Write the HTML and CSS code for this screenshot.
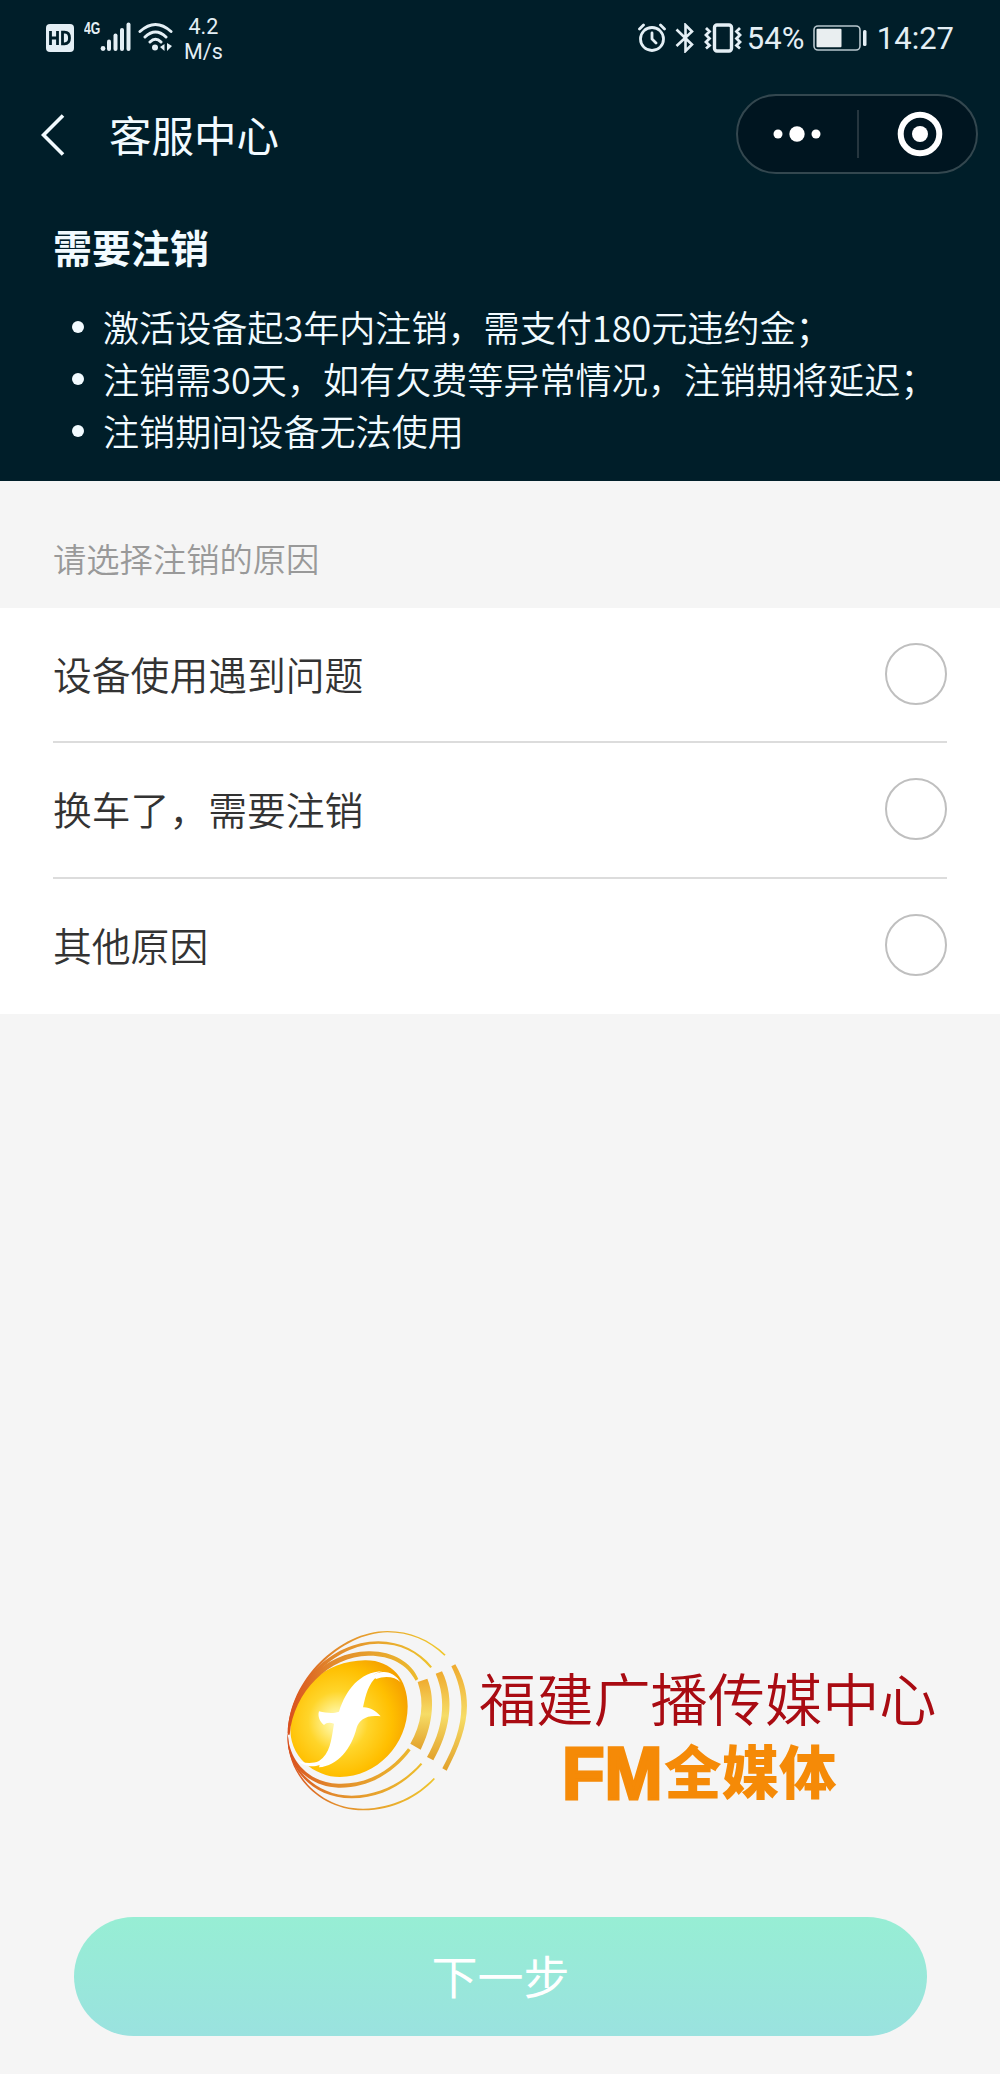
FILE: index.html
```html
<!DOCTYPE html>
<html lang="zh-CN">
<head>
    <meta charset="UTF-8">
    <meta name="viewport" content="width=device-width, initial-scale=1.0">
    <title>客服中心</title>
    <link rel="stylesheet" href="styles.css">
</head>
<body>
    <header class="header">
        <!-- Status bar -->
        <div class="status-bar">
            <div class="status-left">
                <svg class="hd-icon" width="28" height="28" viewBox="0 0 28 28">
                    <rect width="28" height="28" rx="4" fill="#e4eff5"/>
                    <path d="M4.500 7v14M11.500 7v14M4.500 14h7M16.500 8.200v11.600h2q5 0 5-5.800t-5-5.800z" fill="none" stroke="#001e29" stroke-width="2.800"/>
                </svg>
                <span class="network">4G</span>
                <svg class="signal-icon" width="32" height="30" viewBox="0 0 32 30" fill="#e4eff5">
                    <circle cx="3" cy="26.500" r="2.400"/>
                    <rect x="7" y="17.500" width="4" height="11.500" rx="2"/>
                    <rect x="13.500" y="11.500" width="4" height="17.500" rx="2"/>
                    <rect x="20" y="6" width="4" height="23" rx="2"/>
                    <rect x="26.500" y="0.500" width="4" height="28.500" rx="2"/>
                </svg>
                <svg class="wifi-icon" width="36" height="30" viewBox="0 0 36 30" fill="none" stroke="#e4eff5" stroke-width="3" stroke-linecap="round">
                    <path d="M2 9.500Q17.500-4.500 33 9.500M7 15Q17.500 5 28 15M12 20Q17.500 14.500 23 20"/>
                    <circle cx="17" cy="25.500" r="3" fill="#e4eff5" stroke="none"/>
                    <path d="M22 25l4.500-3v7zM29 21v8l5-5z" fill="#e4eff5" stroke="none"/>
                </svg>
                <div class="speed">
                    <span>4.2</span>
                    <span>M/s</span>
                </div>
            </div>
            <div class="status-right">
                <svg width="28" height="30" viewBox="0 0 28 30" fill="none" stroke="#e4eff5" stroke-width="2.800" stroke-linecap="round">
                    <circle cx="14" cy="16" r="11.500"/>
                    <path d="M14 10v6l4 4M1.500 6l4-4M26.500 6l-4-4"/>
                </svg>
                <svg class="bluetooth-icon" width="20" height="30" viewBox="0 0 20 30" fill="none" stroke="#e4eff5" stroke-width="2.600">
                    <path d="M1.500 6.500l15.500 15-6.500 6.500V2l6.500 6.500-15.500 14.500"/>
                </svg>
                <svg class="vibrate-icon" width="38" height="30" viewBox="0 0 38 30" fill="none" stroke="#e4eff5" stroke-width="3.400">
                    <rect x="10.500" y="2" width="17" height="26" rx="2.500"/>
                    <path d="M2 5l3.500 3.500-3.500 3.500 3.500 3.500-3.500 3.500 3.500 3.500-3.500 3M36 5l-3.500 3.500 3.500 3.500-3.500 3.500 3.500 3.500-3.500 3.500 3.500 3" stroke-width="2.800"/>
                </svg>
                <span class="percent">54%</span>
                <svg class="battery-icon" width="54" height="26" viewBox="0 0 54 26">
                    <rect x="1" y="1" width="46" height="24" rx="4" fill="none" stroke="#b7c6cd" stroke-width="1.600"/>
                    <rect x="3.500" y="3.800" width="25" height="18.500" rx="1" fill="#e9eef0"/>
                    <rect x="50" y="5" width="3.500" height="16" rx="1.500" fill="#e4eff5"/>
                </svg>
                <span class="clock">14:27</span>
            </div>
        </div>

        <!-- Navigation -->
        <div class="nav">
            <svg class="back-icon" width="26" height="44" viewBox="0 0 26 44" fill="none" stroke="#f2fbff" stroke-width="3.600">
                <path d="M22 2.500L2.500 22 22 41.500"/>
            </svg>
            <h1>客服中心</h1>
            <div class="capsule">
                <svg class="more-icon" width="48" height="16" viewBox="0 0 48 16" fill="#fff">
                    <circle cx="5" cy="8" r="4.500"/>
                    <circle cx="24" cy="8" r="7.700"/>
                    <circle cx="43" cy="8" r="4.500"/>
                </svg>
                <span class="capsule-line"></span>
                <svg class="close-icon" width="46" height="46" viewBox="0 0 46 46">
                    <circle cx="23" cy="23" r="19.300" fill="none" stroke="#fff" stroke-width="6"/>
                    <circle cx="23" cy="23" r="8" fill="#fff"/>
                </svg>
            </div>
        </div>

        <!-- Cancellation notice -->
        <div class="notice">
            <h2>需要注销</h2>
            <ul>
                <li>激活设备起3年内注销，需支付180元违约金；</li>
                <li>注销需30天，如有欠费等异常情况，注销期将延迟；</li>
                <li>注销期间设备无法使用</li>
            </ul>
        </div>
    </header>

    <main>
        <p class="hint">请选择注销的原因</p>
        <div class="options">
            <label class="option">
                <span>设备使用遇到问题</span>
                <input type="radio" name="reason">
            </label>
            <label class="option">
                <span>换车了，需要注销</span>
                <input type="radio" name="reason">
            </label>
            <label class="option">
                <span>其他原因</span>
                <input type="radio" name="reason">
            </label>
        </div>
    </main>

    <!-- Broadcaster logo -->
    <div class="brand">
        <svg class="brand-logo" width="185" height="185" viewBox="45 55 555 555">
            <defs>
                <radialGradient id="ball" gradientUnits="userSpaceOnUse" cx="205" cy="335" r="215">
                    <stop offset="0" stop-color="#fffbd0"/>
                    <stop offset="0.180" stop-color="#fff08a"/>
                    <stop offset="0.420" stop-color="#ffd52a"/>
                    <stop offset="0.750" stop-color="#ffbf00"/>
                    <stop offset="1" stop-color="#f6a300"/>
                </radialGradient>
                <linearGradient id="ring" gradientUnits="userSpaceOnUse" x1="55" y1="0" x2="500" y2="0">
                    <stop offset="0" stop-color="#d9501e"/>
                    <stop offset="0.300" stop-color="#e28a2c"/>
                    <stop offset="1" stop-color="#efc62d"/>
                </linearGradient>
                <linearGradient id="wave" x1="0" y1="0" x2="0" y2="1">
                    <stop offset="0" stop-color="#efaa2e"/>
                    <stop offset="0.500" stop-color="#f6dc66"/>
                    <stop offset="1" stop-color="#e2a12b"/>
                </linearGradient>
            </defs>
            <path d="M62 345C70 240 165 153 285 152C365 151 413 208 413 290C413 405 320 502 210 502C135 502 52 440 62 345Z" fill="url(#ball)"/>
            <g fill="url(#ring)">
                <path d="M54 370C56 210 210 64 352 64C420 64 480 90 527 135L523 138C475 93 420 68 352 68C215 70 62 215 57 370Z"/>
                <path d="M53 370C60 225 180 96 325 95C393 96 448 125 486 171L481 175C440 127 393 102 325 102C190 103 64 240 58 370Z"/>
                <path d="M54 375C60 240 160 127 295 125C365 123 425 158 445 208L437 213C410 162 360 137 295 138C180 139 70 245 59 375Z"/>
                <path d="M54 360C48 435 105 520 205 522C300 525 370 475 414 416L422 422C375 485 300 536 205 534C105 530 40 450 54 360Z"/>
                <path d="M54 375C52 465 130 558 245 558C335 556 403 515 452 460L457 464C405 523 335 565 245 566C120 566 45 465 54 375Z"/>
                <path d="M54 380C55 490 150 598 280 597C370 595 440 558 491 505L495 508C443 564 370 601 280 602C145 602 48 490 54 380Z"/>
            </g>
            <g fill="url(#wave)">
                <path d="M443 217L472 207C499 272 485 355 452 420L421 402C454 345 465 280 443 217Z"/>
                <path d="M497 192L516 185C558 270 537 370 490 452L471 442C518 360 532 275 497 192Z"/>
                <path d="M544 170L556 164C618 270 590 370 530 483L517 476C575 370 597 275 544 170Z"/>
            </g>
            <!-- White bird shape -->
            <path d="M338 184C268 188 228 240 207 306C190 312 170 310 147 305C142 320 150 338 162 346C170 338 180 338 192 342C184 392 180 432 147 454C125 464 95 461 78 448C94 470 127 474 149 466L147 473C203 468 244 418 260 354C268 330 290 314 332 320C316 303 300 292 279 293C288 252 296 222 320 201C345 187 370 194 388 214C370 184 335 181 309 196C317 190 327 187 338 184Z" fill="#fff"/>
            <path d="M310 198C340 178 375 193 392 218C376 201 345 197 318 208Z" fill="#fff"/>
        </svg>
        <div class="brand-text">
            <span class="brand-name">福建广播传媒中心</span>
            <span class="brand-sub"><span class="brand-fm">FM</span><span class="brand-media">全媒体</span></span>
        </div>
    </div>

    <button class="next-btn" type="button">下一步</button>
</body>
</html>
```

FILE: styles.css
```css
* {
    margin: 0;
    padding: 0;
    box-sizing: border-box;
}

body {
    background-color: #f5f5f5;
    font-family: "Noto Sans CJK SC", sans-serif;
    width: 1000px;
    height: 2074px;
    display: flex;
    flex-direction: column;
}

svg {
    display: block;
    flex-shrink: 0;
}

.header {
    height: 481px;
    background-color: #001e29;
    color: #f2fbff;
}

.status-bar {
    height: 76px;
    padding: 0 47px 0 46px;
    display: flex;
    justify-content: space-between;
    font-family: Roboto, sans-serif;
    color: #e4eff5;
}

.status-left,
.status-right {
    display: flex;
    align-items: center;
}

.network {
    font-family: "Liberation Sans", sans-serif;
    font-size: 17px;
    font-weight: bold;
    line-height: 16px;
    width: 16px;
    margin: -18px 0 0 10px;
    transform: scaleX(0.72);
    transform-origin: left;
}

.signal-icon {
    margin-top: -2px;
}

.wifi-icon {
    margin: -2px 0 0 6px;
}

.speed {
    display: flex;
    flex-direction: column;
    align-items: center;
    margin: 1px 0 0 10px;
    font-size: 21.5px;
    line-height: 25px;
}

.status-right {
    font-size: 31px;
    margin-right: -1px;
}

.bluetooth-icon {
    margin-left: 9px;
}

.vibrate-icon {
    margin-left: 9px;
}

.percent {
    margin-left: 5px;
    width: 60px;
}

.battery-icon {
    margin-left: 6px;
}

.clock {
    margin-left: 10px;
}

.nav {
    height: 118px;
    padding: 0 22px 0 41px;
    display: flex;
    align-items: center;
}

.nav h1 {
    font-size: 42.5px;
    font-weight: 400;
    line-height: 60px;
    margin: -2px 0 0 42px;
}

.capsule {
    width: 242px;
    height: 80px;
    margin-left: auto;
    margin-top: -2px;
    padding-left: 35px;
    border: 2px solid #33474f;
    border-radius: 40px;
    background-color: #001520;
    display: flex;
    align-items: center;
}

.capsule-line {
    width: 2px;
    height: 48px;
    margin-left: 36px;
    background-color: #26363f;
}

.close-icon {
    margin-left: 38px;
}

.notice {
    padding: 23px 53px 0;
}

.notice h2 {
    font-size: 39px;
    font-weight: 700;
    line-height: 58px;
}

.notice ul {
    list-style: none;
    margin-top: 25px;
}

.notice li {
    display: flex;
    align-items: center;
    font-size: 36.1px;
    font-weight: 350;
    line-height: 52px;
    white-space: nowrap;
}

.notice li::before {
    content: "";
    width: 12px;
    height: 12px;
    margin: 2px 19px 0 19px;
    border-radius: 50%;
    background-color: #f2fbff;
}

.hint {
    height: 127px;
    padding: 52px 53px 0;
    font-size: 33.3px;
    font-weight: 350;
    line-height: 50px;
    color: #999;
}

.options {
    height: 406px;
    padding: 0 53px;
    background-color: #fff;
}

.option {
    height: 136px;
    padding-bottom: 2px;
    display: flex;
    align-items: center;
    justify-content: space-between;
    border-bottom: 2px solid #dcdcdc;
    font-size: 38.8px;
    font-weight: 350;
    color: #333;
}

.option:first-child {
    height: 135px;
}

.option span {
    margin-top: -2px;
}

.option:last-child {
    border-bottom: none;
    padding-bottom: 4px;
}

.option input {
    appearance: none;
    width: 62px;
    height: 62px;
    border: 2px solid #bfbfbf;
    border-radius: 50%;
    background-color: #fff;
}

.brand {
    margin: 614px 0 0 285px;
    height: 185px;
    display: flex;
}

.brand-text {
    margin-left: 9px;
    display: flex;
    flex-direction: column;
}

.brand-name {
    margin-top: 26px;
    font-size: 57.2px;
    font-weight: 350;
    line-height: 84px;
    color: #a90b12;
}

.brand-sub {
    display: flex;
    margin-left: 83px;
    height: 66px;
    line-height: 66px;
    color: #f58a07;
}

.brand-fm {
    width: 102px;
    margin-top: 2px;
    font-family: "Liberation Sans", sans-serif;
    font-size: 75px;
    font-weight: bold;
    -webkit-text-stroke: 3px #f58a07;
    transform: scaleX(0.93);
    transform-origin: left;
}

.brand-media {
    margin-top: -2px;
    font-size: 57.5px;
    font-weight: 900;
}

.next-btn {
    width: 853px;
    height: 119px;
    margin: 104px 0 0 74px;
    padding-bottom: 5px;
    border: none;
    border-radius: 60px;
    background: linear-gradient(#97eed4, #9ae2df);
    color: #fff;
    font-family: inherit;
    font-size: 46px;
    font-weight: 400;
}
```
